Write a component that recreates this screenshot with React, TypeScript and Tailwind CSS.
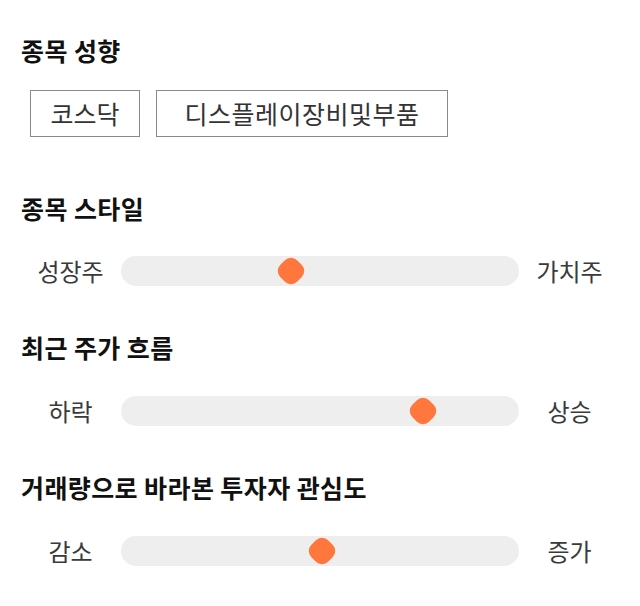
// App.tsx
const FONT = "font-['Noto_Sans_CJK_KR','Noto_Sans',sans-serif]";

interface SliderRowProps {
  left: string;
  right: string;
  value: number;
}

// Read-only slider: grey track, orange thumb
const SliderRow = ({ left, right, value }: SliderRowProps) => {
  return (
    <div className="flex items-center h-[30px]">
      <div className="w-[101px] text-center text-[24px] leading-[30px] text-[#3a3a3a]">{left}</div>
      <div className="relative w-[398px] h-[30px] rounded-[15px] bg-[#eeeeee]">
        <div
          className="absolute top-1/2 w-[24px] h-[24px] -translate-x-1/2 -translate-y-1/2 rotate-45 rounded-[9px] bg-[#ff773d]"
          style={{ left: `${value}%` }}
        />
      </div>
      <div className="w-[101px] text-center text-[24px] leading-[30px] text-[#3a3a3a]">{right}</div>
    </div>
  );
};

const Heading = ({ children }: { children: string }) => (
  <h2 className="text-[25px] leading-[30px] font-bold text-[#111111] pl-[1px] tracking-[0.4px]">{children}</h2>
);

export default function App() {
  return (
    <div className={`${FONT} w-[640px] h-[606px] bg-white px-[20px] pt-[35px] flex flex-col`}>
      <Heading>종목 성향</Heading>

      {/* Tags */}
      <div className="flex gap-[16px] pl-[10px] mt-[25px]">
        <div className="w-[110px] h-[47px] flex items-center justify-center border border-[#8a8a8a] text-[25px] text-[#333333]">
          코스닥
        </div>
        <div className="w-[292px] h-[47px] flex items-center justify-center border border-[#8a8a8a] text-[25px] text-[#333333] tracking-[0.5px]">
          디스플레이장비및부품
        </div>
      </div>

      <div className="mt-[56px]">
        <Heading>종목 스타일</Heading>
      </div>
      <div className="mt-[33px]">
        <SliderRow left="성장주" right="가치주" value={42.7} />
      </div>

      <div className="mt-[46px]">
        <Heading>최근 주가 흐름</Heading>
      </div>
      <div className="mt-[34px]">
        <SliderRow left="하락" right="상승" value={76} />
      </div>

      <div className="mt-[46px]">
        <Heading>거래량으로 바라본 투자자 관심도</Heading>
      </div>
      <div className="mt-[34px]">
        <SliderRow left="감소" right="증가" value={50.5} />
      </div>
    </div>
  );
}
